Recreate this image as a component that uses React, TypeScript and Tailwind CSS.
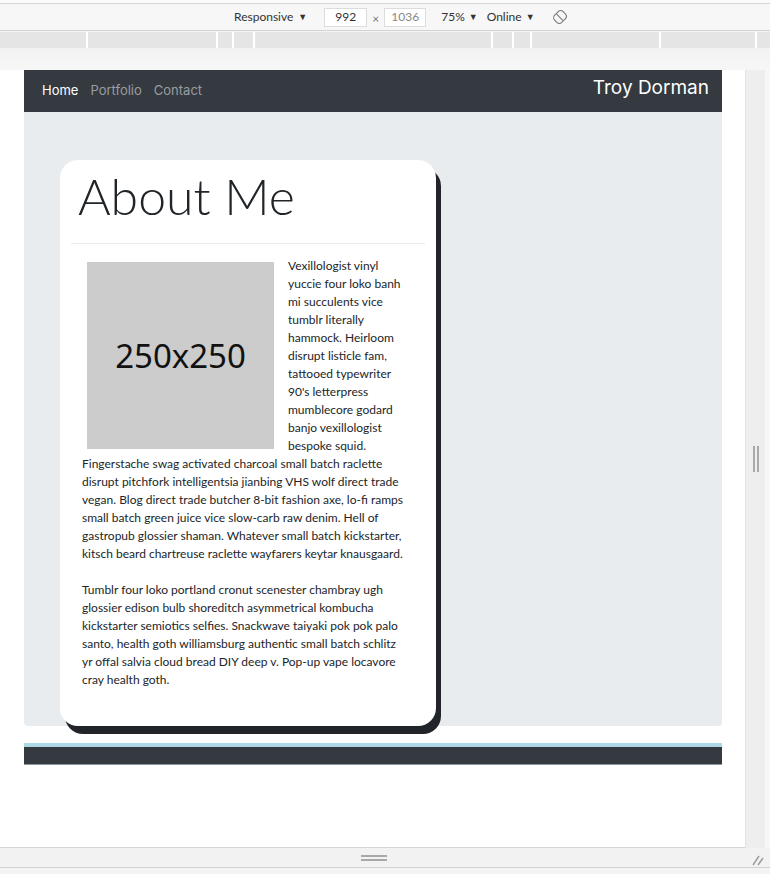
import React from 'react';

const sideLines = [
  "Vexillologist vinyl",
  "yuccie four loko banh",
  "mi succulents vice",
  "tumblr literally",
  "hammock. Heirloom",
  "disrupt listicle fam,",
  "tattooed typewriter",
  "90's letterpress",
  "mumblecore godard",
  "banjo vexillologist",
  "bespoke squid.",
];

const restLines = [
  "Fingerstache swag activated charcoal small batch raclette",
  "disrupt pitchfork intelligentsia jianbing VHS wolf direct trade",
  "vegan. Blog direct trade butcher 8-bit fashion axe, lo-fi ramps",
  "small batch green juice vice slow-carb raw denim. Hell of",
  "gastropub glossier shaman. Whatever small batch kickstarter,",
  "kitsch beard chartreuse raclette wayfarers keytar knausgaard.",
];

const secondLines = [
  "Tumblr four loko portland cronut scenester chambray ugh",
  "glossier edison bulb shoreditch asymmetrical kombucha",
  "kickstarter semiotics selfies. Snackwave taiyaki pok pok palo",
  "santo, health goth williamsburg authentic small batch schlitz",
  "yr offal salvia cloud bread DIY deep v. Pop-up vape locavore",
  "cray health goth.",
];

// ruler segments: width incl. 2px white divider
const rulerSegs = [88, 130, 16, 21, 238, 21, 18, 129, 96];

function Line({ text }: { text: string }) {
  return <div className="h-[18px] leading-[18px] whitespace-nowrap">{text}</div>;
}

function RotateIcon() {
  return (
    <svg width="16" height="16" viewBox="0 0 16 16" fill="none" stroke="#7a7a7a" strokeWidth="1.1">
      <rect x="3" y="2" width="10" height="12" rx="3.5" transform="rotate(45 8 8)" />
      <line x1="4.6" y1="5.2" x2="10.8" y2="11.4" />
    </svg>
  );
}

function Toolbar() {
  return (
    <div className="h-[27px] bg-[#f7f7f7] border-b border-[#d2d2d2] flex items-center pl-[234px] text-[12px] text-[#333] font-['Lato',sans-serif]">
      <span>Responsive</span>
      <span className="ml-[5px] text-[9px]">▼</span>
      <div className="ml-[17px] w-[43px] h-[19px] bg-white border border-[#dcdcdc] flex items-center justify-center">992</div>
      <span className="mx-[5px] text-[#777] text-[12px] mt-[3px]">×</span>
      <div className="w-[42px] h-[19px] bg-white border border-[#dcdcdc] flex items-center justify-center text-[#888]">1036</div>
      <span className="ml-[15px]">75%</span>
      <span className="ml-[4px] text-[9px]">▼</span>
      <span className="ml-[9px]">Online</span>
      <span className="ml-[4px] text-[9px]">▼</span>
      <div className="ml-[17px] flex items-center">
        <RotateIcon />
      </div>
    </div>
  );
}

function Ruler() {
  return (
    <div className="mt-[1px] h-[16px] bg-[#e5e5e5] flex">
      {rulerSegs.map((w, i) => (
        <div key={i} className="h-full border-r-2 border-white shrink-0" style={{ width: w }} />
      ))}
      <div className="flex-1" />
    </div>
  );
}

function Site() {
  return (
    <div className="w-[745px] h-[778px] bg-white border-b border-[#d6d6d6] overflow-hidden">
      <div className="ml-[24px] w-[698px]">
        {/* navbar */}
        <nav className="h-[42px] bg-[#343a40] flex items-center justify-between pl-[18px] pr-[13px] font-['Inter',sans-serif]">
          <div className="flex items-center gap-[12px] text-[13px]">
            <a className="text-white">Home</a>
            <a className="text-[#9a9da0]">Portfolio</a>
            <a className="text-[#9a9da0]">Contact</a>
          </div>
          <div className="text-[19px] text-white pb-[6px]">Troy Dorman</div>
        </nav>

        {/* main */}
        <main className="bg-[#e9ecef] rounded-b-[4px] pt-[48px] pl-[36px]">
          <div className="w-[376px] bg-white rounded-[18px] shadow-[5px_8px_0_#212529] pb-[37px] text-[#212529]">
            <h1 className="pt-[11px] pl-[18px] text-[50px] leading-none font-light font-['Lato',sans-serif] mb-[22px]">
              About Me
            </h1>
            <div className="mx-[11px] h-px bg-[#eaeaea]" />
            <div className="px-[22px] pt-[13px] text-[12px] font-['Lato',sans-serif]">
              <div className="flex items-start">
                <div className="ml-[5px] mt-[5px] mr-[14px] w-[187px] h-[187px] bg-[#cccccc] flex items-center justify-center shrink-0">
                  <span className="text-[33px] text-[#111] font-['Noto_Sans',sans-serif]">250x250</span>
                </div>
                <div>
                  {sideLines.map((t) => (
                    <Line key={t} text={t} />
                  ))}
                </div>
              </div>
              {restLines.map((t) => (
                <Line key={t} text={t} />
              ))}
              <div className="h-[18px]" />
              {secondLines.map((t) => (
                <Line key={t} text={t} />
              ))}
            </div>
          </div>
        </main>

        {/* footer */}
        <footer className="mt-[17px] border-t-4 border-[#add8e6] h-[22px] bg-[#343a40] border-b border-b-[#8d959c]" />
      </div>
    </div>
  );
}

export default function App() {
  return (
    <div className="w-[770px] h-[874px] bg-[#f4f4f4] overflow-hidden flex flex-col">
      <div className="h-[4px] bg-[#fbfbfb] border-b border-[#d6d6d6]" />
      <Toolbar />
      <Ruler />
      <div className="h-[22px] bg-gradient-to-b from-[#f2f2f2] to-[#f7f7f7]" />
      <div className="flex">
        <Site />
        <div className="w-[20px] bg-[#eeeeee] border-l border-[#e2e2e2] flex items-center justify-center gap-[2px]">
          <div className="w-[2px] h-[26px] bg-[#a8a8a8]" />
          <div className="w-[2px] h-[26px] bg-[#a8a8a8]" />
        </div>
        <div className="flex-1 bg-[#f7f7f7]" />
      </div>
      <div className="h-[20px] bg-[#f2f2f2] border-b border-[#d2d2d2] flex items-center">
        <div className="ml-[361px] flex flex-col gap-[2px]">
          <div className="w-[26px] h-[2px] bg-[#a8a8a8]" />
          <div className="w-[26px] h-[2px] bg-[#a8a8a8]" />
        </div>
        <div className="ml-auto mr-[5px] mt-[2px]">
          <svg width="14" height="14" viewBox="0 0 14 14" stroke="#9a9a9a" strokeWidth="1.4">
            <line x1="2" y1="13" x2="8" y2="4" />
            <line x1="7" y1="13" x2="12" y2="6" />
          </svg>
        </div>
      </div>
      <div className="flex-1 bg-[#f3f3f3]" />
    </div>
  );
}
